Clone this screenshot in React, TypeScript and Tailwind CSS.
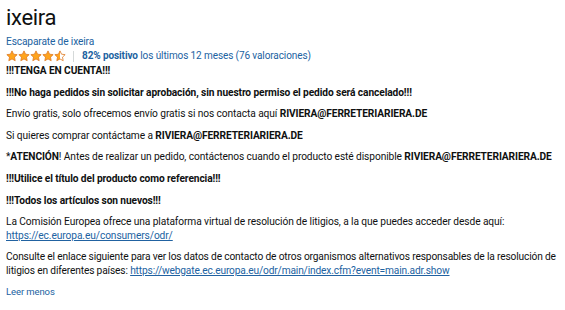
import { Fragment } from 'react';

const Star = ({ fill }: { fill: 'full' | 'half' | 'empty' }) => (
  <svg width="12" height="12" viewBox="0 0 24 24" className="shrink-0">
    <defs>
      <linearGradient id="half-star">
        <stop offset="50%" stopColor="#FFA41C" />
        <stop offset="50%" stopColor="#ffffff" />
      </linearGradient>
    </defs>
    <path
      d="M12 1.8l3.1 6.6 7.2.9-5.3 5 1.4 7.1L12 17.9l-6.4 3.5 1.4-7.1-5.3-5 7.2-.9z"
      fill={fill === 'full' ? '#FFA41C' : fill === 'half' ? 'url(#half-star)' : '#ffffff'}
      stroke="#DE7921"
      strokeWidth="1.6"
      strokeLinejoin="round"
    />
  </svg>
);

const EMAIL = 'RIVIERA@FERRETERIARIERA.DE';

const App = () => {
  const stars: ('full' | 'half' | 'empty')[] = ['full', 'full', 'full', 'full', 'half'];

  return (
    <div className="w-[565px] h-[310px] bg-white pl-[6px] pr-[2px] pt-[3px] text-[#0F1111] text-[10.2px] leading-[13.5px] tracking-[-0.09px] font-['Roboto',sans-serif] overflow-hidden">
      <h1 className="text-[22px] leading-[30px] tracking-[-0.3px] font-normal">ixeira</h1>
      <a className="block mt-[2px] text-[10.2px] leading-[14px] tracking-[-0.15px] text-[#2162A1]">Escaparate de ixeira</a>
      <div className="flex items-center h-[14px] mb-[1px]">
        <div className="flex">
          {stars.map((s, i) => (
            <Fragment key={i}>
              <Star fill={s} />
            </Fragment>
          ))}
        </div>
        <span className="ml-[7px] mr-[8px] h-[11px] w-px bg-[#D5D9D9]" />
        <span className="text-[10px] tracking-[-0.1px] text-[#2162A1]">
          <b className="font-bold">82% positivo</b> los últimos 12 meses (76 valoraciones)
        </span>
      </div>

      <div className="flex flex-col gap-[8.1px]">
        <p className="font-bold tracking-[-0.1px]">!!!TENGA EN CUENTA!!!</p>
        <p className="font-bold tracking-[-0.1px]">!!!No haga pedidos sin solicitar aprobación, sin nuestro permiso el pedido será cancelado!!!</p>
        <p>
          Envío gratis, solo ofrecemos envío gratis si nos contacta aquí <b className="tracking-[-0.1px]">{EMAIL}</b>
        </p>
        <p>
          Si quieres comprar contáctame a <b className="tracking-[-0.1px]">{EMAIL}</b>
        </p>
        <p>
          *<b className="tracking-[-0.1px]">ATENCIÓN</b>! Antes de realizar un pedido, contáctenos cuando el producto esté disponible{' '}
          <b className="tracking-[-0.1px]">{EMAIL}</b>
        </p>
        <p className="font-bold tracking-[-0.1px]">!!!Utilice el título del producto como referencia!!!</p>
        <p className="font-bold tracking-[-0.1px]">!!!Todos los artículos son nuevos!!!</p>
        <p>
          La Comisión Europea ofrece una plataforma virtual de resolución de litigios, a la que puedes acceder desde aquí:
          <br />
          <a className="text-[#2162A1] underline">https://ec.europa.eu/consumers/odr/</a>
        </p>
        <p className="tracking-[-0.15px]">
          Consulte el enlace siguiente para ver los datos de contacto de otros organismos alternativos responsables de la resolución de litigios en diferentes países:{' '}
          <a className="text-[#2162A1] underline">https://webgate.ec.europa.eu/odr/main/index.cfm?event=main.adr.show</a>
        </p>
        <a className="text-[9.5px] tracking-[-0.1px] text-[#2162A1]">Leer menos</a>
      </div>
    </div>
  );
};

export default App;
